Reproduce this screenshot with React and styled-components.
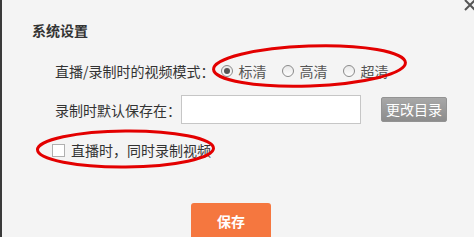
import React, { useState } from "react";
import styled, { createGlobalStyle } from "styled-components";

const GlobalStyle = createGlobalStyle`
  body {
    margin: 0;
    background: #ffffff;
    font-family: "Noto Sans CJK SC", "Liberation Sans", sans-serif;
  }
`;

const Frame = styled.div`
  display: flex;
  width: 474px;
  height: 237px;
  overflow: hidden;
`;

const Edge = styled.div`
  width: 2px;
  background: #3a3a3a;
`;

const Panel = styled.div`
  flex: 1;
  position: relative;
  background: #f4f4f4;
  padding: 20px 0 0 30px;
  color: #333;
  font-size: 14px;
`;

const Close = styled.svg`
  position: absolute;
  top: -1px;
  right: -2px;
`;

const Title = styled.div`
  height: 20px;
  line-height: 20px;
  font-weight: bold;
  color: #333;
`;

const Form = styled.div`
  display: flex;
  flex-direction: column;
  padding-left: 23px;
`;

const Row = styled.div`
  display: flex;
  align-items: center;
  height: ${(p) => p.h}px;
  margin-top: ${(p) => p.mt}px;
  margin-left: ${(p) => p.ml || 0}px;
  line-height: 20px;
  white-space: nowrap;
`;

const Label = styled.span`
  color: #333;
`;

const Group = styled.div`
  position: relative;
  display: flex;
  align-items: center;
  height: 20px;
  gap: ${(p) => p.gap || 0}px;
  margin-left: ${(p) => p.ml || 0}px;
`;

const Option = styled.label`
  display: flex;
  align-items: center;
  gap: 6px;
  color: #555;
  cursor: pointer;
`;

const RadioDot = styled.span`
  position: relative;
  width: 12px;
  height: 12px;
  box-sizing: border-box;
  border-radius: 50%;
  border: 1px solid #8a8a8a;
  background: linear-gradient(#e8e8e8, #fdfdfd);

  &::after {
    content: "";
    position: absolute;
    left: 2px;
    top: 2px;
    width: 6px;
    height: 6px;
    border-radius: 50%;
    background: #555;
    display: ${(p) => (p.checked ? "block" : "none")};
  }
`;

const PathInput = styled.input`
  width: 180px;
  height: 29px;
  box-sizing: border-box;
  border: 1px solid #c6c6c6;
  background: #fff;
  outline: none;
  padding: 0 6px;
  font-size: 14px;
`;

const GrayButton = styled.button`
  margin-left: 20px;
  width: 66px;
  height: 25px;
  border: 1px solid #939393;
  border-radius: 2px;
  background: linear-gradient(#a8a8a8, #8c8c8c);
  color: #fff;
  font-family: inherit;
  font-size: 14px;
  padding: 0;
  line-height: 23px;
  cursor: pointer;
`;

const CheckBox = styled.span`
  width: 13px;
  height: 13px;
  box-sizing: border-box;
  border: 1px solid #b0b0b0;
  background: #fff;
`;

const Mark = styled.svg`
  position: absolute;
  left: ${(p) => p.x}px;
  top: ${(p) => p.y}px;
  pointer-events: none;
`;

const Footer = styled.div`
  display: flex;
  margin-top: 43px;
  padding-left: 159px;
`;

const SaveButton = styled.button`
  width: 80px;
  height: 36px;
  border: none;
  border-radius: 3px;
  background: #f5773f;
  color: #fff;
  font-family: inherit;
  font-size: 14px;
  font-weight: bold;
  padding: 0;
  cursor: pointer;
`;

const Ellipse = ({ x, y, w, h, rx, ry, rot }) => (
  <Mark x={x} y={y} width={w} height={h} viewBox={`0 0 ${w} ${h}`}>
    <ellipse
      cx={w / 2}
      cy={h / 2}
      rx={rx}
      ry={ry}
      fill="none"
      stroke="#e30000"
      strokeWidth="3"
      transform={`rotate(${rot} ${w / 2} ${h / 2})`}
    />
  </Mark>
);

const modes = ["标清", "高清", "超清"];

export default function App() {
  const [mode, setMode] = useState("标清");
  return (
    <>
      <GlobalStyle />
      <Frame>
        <Edge />
        <Panel>
          <Close width="12" height="12" viewBox="0 0 12 12">
            <path d="M1 1 L11 11 M11 1 L1 11" stroke="#555" strokeWidth="2" />
          </Close>
          <Title>系统设置</Title>
          <Form>
            <Row h={30} mt={16}>
              <Label>直播/录制时的视频模式：</Label>
              <Group gap={15} ml={6}>
                {modes.map((m) => (
                  <Option key={m} onClick={() => setMode(m)}>
                    <RadioDot checked={mode === m} />
                    {m}
                  </Option>
                ))}
                <Ellipse x={-11} y={-18} w={199} h={46} rx={96} ry={20} rot={-2} />
              </Group>
            </Row>
            <Row h={29} mt={9}>
              <Label>录制时默认保存在：</Label>
              <PathInput type="text" />
              <GrayButton>更改目录</GrayButton>
            </Row>
            <Row h={20} mt={16} ml={-3}>
              <Group gap={6}>
                <CheckBox />
                <Label>直播时，同时录制视频</Label>
                <Ellipse x={-17} y={-11} w={181} h={40} rx={88} ry={18} rot={-0.5} />
              </Group>
            </Row>
          </Form>
          <Footer>
            <SaveButton>保存</SaveButton>
          </Footer>
        </Panel>
      </Frame>
    </>
  );
}
